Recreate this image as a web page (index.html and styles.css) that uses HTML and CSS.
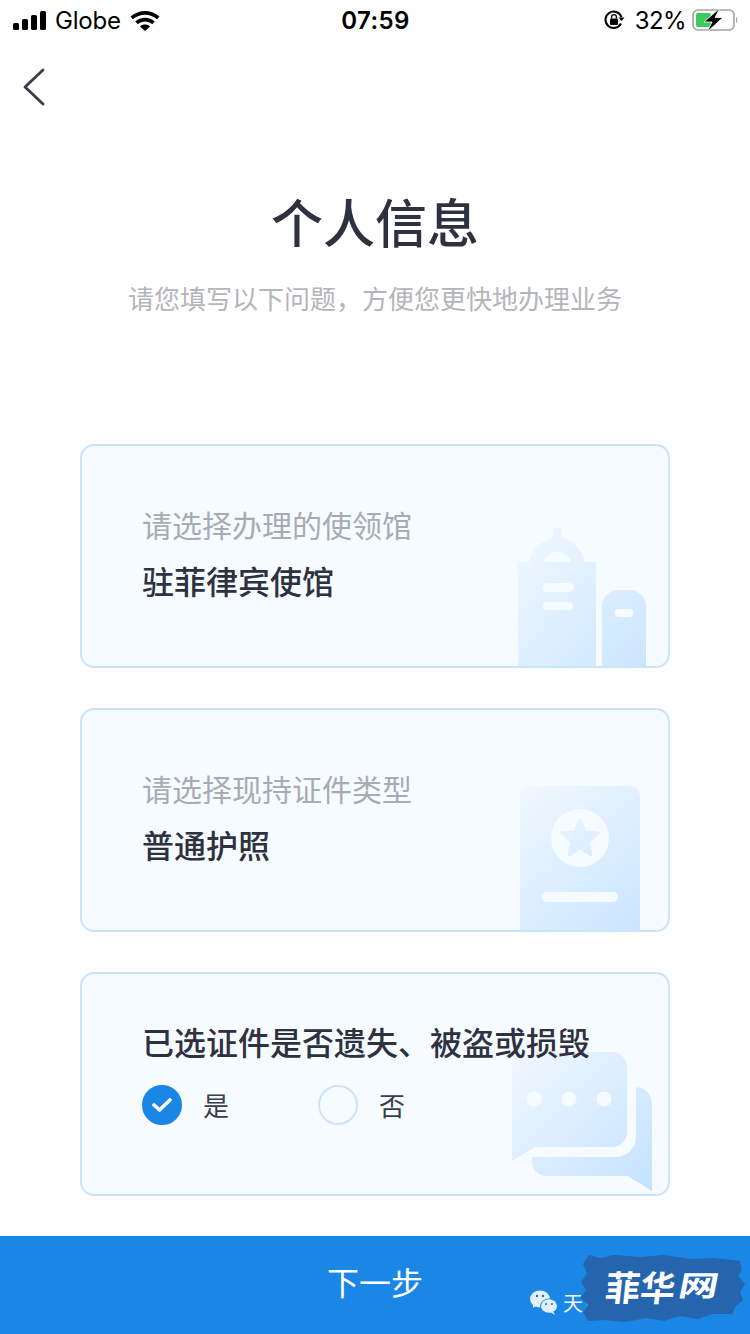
FILE: index.html
```html
<!DOCTYPE html>
<html lang="zh-CN">
<head>
    <meta charset="UTF-8">
    <meta name="viewport" content="width=device-width, initial-scale=1.0">
    <title>个人信息</title>
    <link rel="stylesheet" href="styles.css">
</head>
<body>
    <div class="page">
        <!-- Status bar -->
        <div class="status-bar">
            <div class="status-left">
                <div class="signal"><i class="b1"></i><i class="b2"></i><i class="b3"></i><i class="b4"></i></div>
                <span class="carrier">Globe</span>
                <svg class="wifi" viewBox="0 0 30 22" width="30" height="22">
                    <path d="M0.5 7.5C8.5 0 21.5 0 29.5 7.5L27 10.2C20.4 4.2 9.6 4.2 3 10.2Z" fill="#000"/>
                    <path d="M5.3 12.5C10.8 7.6 19.2 7.6 24.7 12.5L22.2 15.2C18 11.6 12 11.6 7.8 15.2Z" fill="#000"/>
                    <path d="M10 17.4C12.9 15 17.1 15 20 17.4L15 22Z" fill="#000"/>
                </svg>
            </div>
            <div class="status-time">07:59</div>
            <div class="status-right">
                <svg class="lock" viewBox="0 0 22 22" width="22" height="22">
                    <path d="M18 14.5A8.2 8.2 0 1 1 18.4 8" fill="none" stroke="#000" stroke-width="2"/>
                    <path d="M15.5 8.5H21.5L18.5 12Z" fill="#000"/>
                    <rect x="7" y="9.5" width="8" height="6.5" rx="1" fill="#000"/>
                    <path d="M8.6 9.5V8A2.4 2.4 0 0 1 13.4 8V9.5" fill="none" stroke="#000" stroke-width="1.4"/>
                </svg>
                <span class="percent">32%</span>
                <svg class="battery" viewBox="0 0 46 24" width="46" height="24">
                    <rect x="1" y="2" width="41" height="20" rx="5" fill="none" stroke="#a3a3a3" stroke-width="1.6"/>
                    <path d="M44 9C45.700 9.600 45.700 14.400 44 15Z" fill="#a3a3a3"/>
                    <rect x="4" y="5" width="15" height="14" rx="2" fill="#3ccb5a"/>
                    <path d="M28 0L12 14H20L15 24L31 9.500H23Z" fill="#000" stroke="#fff" stroke-width=".8"/>
                </svg>
            </div>
        </div>

        <div class="nav">
            <svg class="back" viewBox="0 0 24 38" width="24" height="38">
                <path d="M21 2L3 19L21 36" fill="none" stroke="#3a3d48" stroke-width="2.8" stroke-linecap="round" stroke-linejoin="round"/>
            </svg>
        </div>

        <h1 class="title">个人信息</h1>
        <p class="subtitle">请您填写以下问题，方便您更快地办理业务</p>

        <div class="cards">
            <div class="card">
                <div class="card-label">请选择办理的使领馆</div>
                <div class="card-value">驻菲律宾使馆</div>
                <svg class="card-art" viewBox="510 526 158 140" width="158" height="140">
                    <defs>
                        <linearGradient id="towerFill" gradientUnits="userSpaceOnUse" x1="510" y1="540" x2="650" y2="670">
                            <stop offset="0" stop-color="#f1f8ff"/>
                            <stop offset="1" stop-color="#c9e5ff"/>
                        </linearGradient>
                    </defs>
                    <path fill="url(#towerFill)" fill-rule="evenodd" d="M518 562H529C532 550 541 541 553 537V532A4.500 4.500 0 0 1 562 532V537C573 541 582 550 585 562H596V668H518ZM543 562H571C566 548 548 548 543 562ZM547 583A4.500 4.500 0 0 0 547 592H569A4.500 4.500 0 0 0 569 583ZM547 602A4 4 0 0 0 547 610H569A4 4 0 0 0 569 602Z"/>
                    <path fill="url(#towerFill)" fill-rule="evenodd" d="M602 668V606A16 16 0 0 1 618 590H630A16 16 0 0 1 646 606V668ZM619 609A4 4 0 0 0 619 617H629A4 4 0 0 0 629 609Z"/>
                </svg>
            </div>

            <div class="card">
                <div class="card-label">请选择现持证件类型</div>
                <div class="card-value">普通护照</div>
                <svg class="card-art" viewBox="510 790 158 140" width="158" height="140">
                    <defs>
                        <linearGradient id="bookFill" gradientUnits="userSpaceOnUse" x1="520" y1="786" x2="640" y2="932">
                            <stop offset="0" stop-color="#f1f8ff"/>
                            <stop offset="1" stop-color="#c9e5ff"/>
                        </linearGradient>
                    </defs>
                    <path fill="url(#bookFill)" d="M520 932V796A10 10 0 0 1 530 786H630A10 10 0 0 1 640 796V932Z"/>
                    <circle cx="580" cy="838" r="29" fill="#f6fbff"/>
                    <path fill="url(#bookFill)" stroke="url(#bookFill)" stroke-width="3" stroke-linejoin="round" d="M580 820L585 832L598 833L588 842L591 855L580 848L569 855L572 842L562 833L575 832Z"/>
                    <rect x="542" y="892" width="76" height="10" rx="5" fill="#f6fbff"/>
                </svg>
            </div>

            <div class="card">
                <div class="card-question">已选证件是否遗失、被盗或损毁</div>
                <div class="options">
                    <div class="option">
                        <span class="radio radio-on">
                            <svg viewBox="0 0 20 16" width="20" height="16"><path d="M2 8L7.500 13L18 3" fill="none" stroke="#fff" stroke-width="3.600" stroke-linecap="round" stroke-linejoin="round"/></svg>
                        </span>
                        <span class="option-text">是</span>
                    </div>
                    <div class="option">
                        <span class="radio"></span>
                        <span class="option-text">否</span>
                    </div>
                </div>
                <svg class="card-art" viewBox="510 1054 158 140" width="158" height="140">
                    <defs>
                        <linearGradient id="chatFill" gradientUnits="userSpaceOnUse" x1="512" y1="1052" x2="652" y2="1190">
                            <stop offset="0" stop-color="#f1f8ff"/>
                            <stop offset="1" stop-color="#c4e2ff"/>
                        </linearGradient>
                    </defs>
                    <path fill="url(#chatFill)" d="M512 1161V1062A10 10 0 0 1 522 1052H612A15 15 0 0 1 627 1067V1132A15 15 0 0 1 612 1147H535Z"/>
                    <circle cx="534" cy="1099" r="7.500" fill="#f6fbff"/>
                    <circle cx="569" cy="1099" r="7.500" fill="#f6fbff"/>
                    <circle cx="604" cy="1099" r="7.500" fill="#f6fbff"/>
                    <path fill="url(#chatFill)" d="M636 1087C646 1088 652 1095 652 1104V1191L628 1176H546A14 14 0 0 1 532 1162V1157H616A20 20 0 0 0 636 1137Z"/>
                </svg>
            </div>
        </div>

        <div class="action-bar">下一步</div>

        <!-- Watermark lies over the action bar -->
        <div class="source-tag">
            <svg viewBox="0 0 28 25" width="28" height="25">
                <ellipse cx="10" cy="9" rx="10" ry="8.500" fill="#e3f0fb"/>
                <path d="M3 13L3 18L8 15Z" fill="#e3f0fb"/>
                <ellipse cx="19" cy="16" rx="9" ry="7.500" fill="#1a86e6"/>
                <ellipse cx="19" cy="16" rx="8" ry="6.800" fill="#e3f0fb"/>
                <path d="M23 21L25 25L20 22Z" fill="#e3f0fb"/>
                <circle cx="7" cy="6" r="1.200" fill="#1a6fbd"/>
                <circle cx="13" cy="6" r="1.200" fill="#1a6fbd"/>
                <circle cx="16" cy="14" r="1" fill="#1a6fbd"/>
                <circle cx="22" cy="14" r="1" fill="#1a6fbd"/>
            </svg>
            <span>天涯</span>
        </div>
        <svg class="stamp" viewBox="0 0 168 72" width="168" height="72">
            <path fill="#2465ad" d="M9 1L20 4L34 1L60 3L84 1L110 5L134 4L160 7L162 16L158 22L165 30L160 38L163 46L156 52L152 60L132 60L118 65L100 62L84 67L66 64L46 68L24 66L8 67L3 58L8 50L0 44L6 36L1 28L7 20L3 10Z"/>
            <text class="stamp-text" transform="translate(24 47) skewX(-6)">菲华</text>
            <text class="stamp-text stamp-wide" transform="translate(97 42) scale(1.100 .8) skewX(-8)">网</text>
        </svg>
    </div>
</body>
</html>
```

FILE: styles.css
```css
* {
    box-sizing: border-box;
}

body {
    margin: 0;
    background: #fff;
    font-family: "Noto Sans CJK SC", "Noto Sans", sans-serif;
}

.page {
    position: relative;
    width: 750px;
    height: 1334px;
    overflow: hidden;
    display: flex;
    flex-direction: column;
}

/* Status bar */
.status-bar {
    height: 40px;
    display: grid;
    grid-template-columns: 1fr auto 1fr;
    align-items: center;
    padding: 0 12px 0 13px;
    color: #000;
    font-family: Inter, "Liberation Sans", sans-serif;
    font-size: 24px;
}

.status-left {
    display: flex;
    align-items: center;
}

.signal {
    display: flex;
    align-items: flex-end;
    gap: 3px;
    height: 19px;
}

.signal i {
    width: 6px;
    background: #000;
    border-radius: 1.5px;
}

.signal .b1 { height: 7px; }
.signal .b2 { height: 11px; }
.signal .b3 { height: 15px; }
.signal .b4 { height: 19px; }

.carrier {
    margin-left: 9px;
    letter-spacing: -0.2px;
}

.wifi {
    margin-left: 9px;
}

.status-time {
    font-weight: 600;
    letter-spacing: 0.4px;
}

.status-right {
    display: flex;
    align-items: center;
    justify-content: flex-end;
}

.percent {
    margin-left: 10px;
    letter-spacing: -0.6px;
}

.battery {
    margin-left: 6px;
}

/* Nav and heading */
.nav {
    height: 145px;
    padding: 28px 0 0 22px;
}

.back {
    display: block;
}

.title {
    margin: 0;
    height: 72px;
    line-height: 72px;
    text-align: center;
    font-size: 52px;
    font-weight: 500;
    color: #2e3240;
}

.subtitle {
    margin: 23px 0 0;
    height: 36px;
    line-height: 36px;
    text-align: center;
    font-size: 26px;
    color: #b3b5ba;
}

/* Cards */
.cards {
    margin: 128px 80px 0;
    display: flex;
    flex-direction: column;
    gap: 40px;
}

.card {
    position: relative;
    height: 224px;
    padding: 58px 0 0 60px;
    background: #f6fbff;
    border: 2px solid #c9e5fb;
    border-radius: 14px;
    overflow: hidden;
}

.card-label {
    height: 40px;
    line-height: 40px;
    font-size: 30px;
    color: #a8abb2;
}

.card-value {
    margin-top: 14px;
    height: 44px;
    line-height: 44px;
    font-size: 32px;
    font-weight: 500;
    color: #2e3240;
}

/* question text sits in front of the chat picture */
.card-question {
    position: relative;
    z-index: 1;
    margin-top: -13px;
    height: 44px;
    line-height: 44px;
    font-size: 32px;
    font-weight: 500;
    color: #2e3240;
}

.card-art {
    position: absolute;
    right: 0;
    bottom: 0;
    overflow: visible;
}

.options {
    margin-top: 22px;
    display: flex;
}

.option {
    width: 176px;
    display: flex;
    align-items: center;
    gap: 21px;
}

.radio {
    width: 40px;
    height: 40px;
    border: 2px solid #c9e5fb;
    border-radius: 50%;
    display: flex;
    align-items: center;
    justify-content: center;
}

.radio-on {
    background: #1a86e6;
    border-color: #1a86e6;
}

.option-text {
    padding-bottom: 2px;
    font-size: 26px;
    color: #3a3d48;
}

/* Bottom button */
.action-bar {
    margin-top: 40px;
    height: 98px;
    line-height: 91px;
    text-align: center;
    font-size: 32px;
    color: #fff;
    background: #1a86e6;
}

/* Watermark over the button */
.source-tag {
    position: absolute;
    left: 530px;
    top: 1288px;
    display: flex;
    align-items: center;
    gap: 5px;
    font-size: 20px;
    color: #f2f7fc;
}

.stamp {
    position: absolute;
    left: 580px;
    top: 1254px;
}

.stamp-text {
    font-size: 35px;
    font-weight: 700;
    fill: #fff;
}

.stamp-wide {
    font-size: 36px;
}
```
